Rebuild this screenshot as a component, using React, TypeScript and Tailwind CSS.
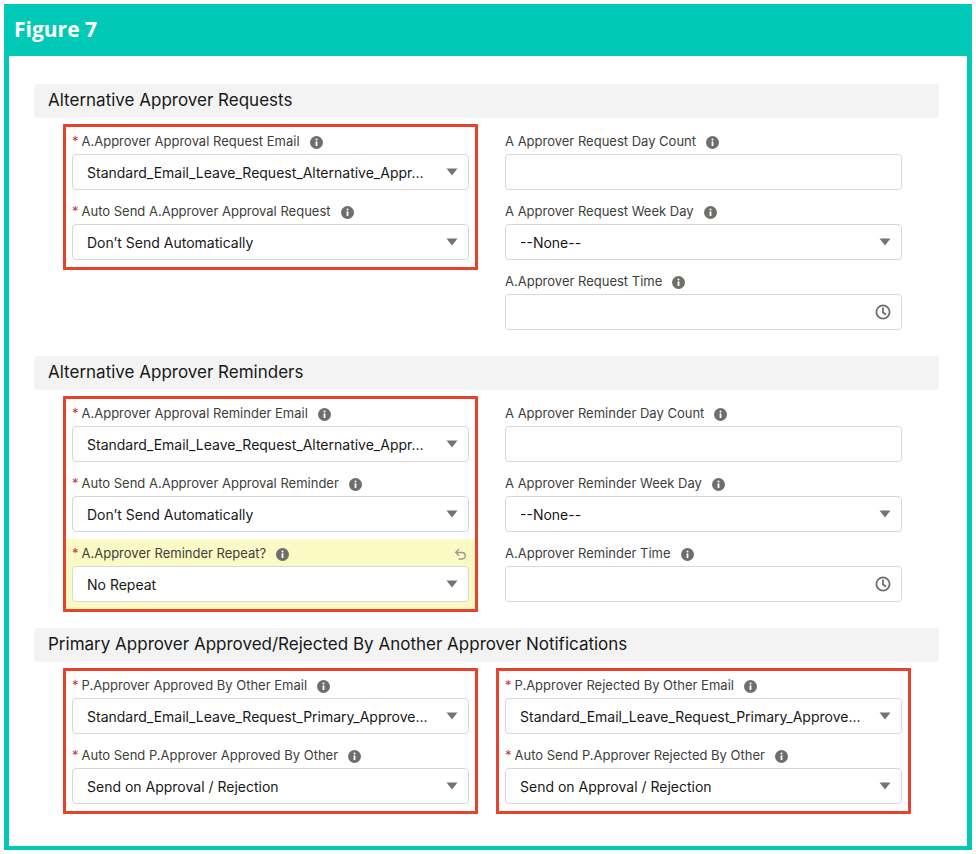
import React from "react";

const Info = () => (
  <svg width="13" height="13" viewBox="0 0 13 13" className="inline-block ml-[10px] shrink-0">
    <circle cx="6.5" cy="6.5" r="6.5" fill="#706e6b" />
    <circle cx="6.5" cy="3.6" r="1" fill="#fff" />
    <rect x="5.6" y="5.3" width="1.8" height="4.6" rx="0.4" fill="#fff" />
  </svg>
);

const Caret = () => (
  <svg width="12" height="8" viewBox="0 0 12 8" className="shrink-0">
    <path d="M0.5 0.5 H11.5 L6 7.5 Z" fill="#747474" />
  </svg>
);

const Clock = () => (
  <svg width="16" height="16" viewBox="0 0 16 16" className="shrink-0">
    <circle cx="8" cy="8" r="6.6" fill="none" stroke="#706e6b" strokeWidth="1.8" />
    <path d="M8 4.2 V8.3 L10.4 10.3" fill="none" stroke="#706e6b" strokeWidth="1.8" strokeLinecap="round" />
  </svg>
);

const Undo = () => (
  <svg width="14" height="14" viewBox="0 0 14 14" className="shrink-0">
    <path d="M3 5.5 H9 A3.2 3.2 0 0 1 9 12 H6" fill="none" stroke="#9a9a9a" strokeWidth="1.4" strokeLinecap="round" />
    <path d="M5.5 2.8 L2.8 5.5 L5.5 8.2" fill="none" stroke="#9a9a9a" strokeWidth="1.4" strokeLinecap="round" strokeLinejoin="round" />
  </svg>
);

type F = { label: string; req?: boolean; value?: string; kind: "select" | "text" | "time"; yellow?: boolean };

const Field = ({ f }: { f: F }) => (
  <div className={`px-[6px] pt-[3px] pb-[7px] ${f.yellow ? "bg-[#fbfac5]" : ""}`}>
    <div className="h-[24px] flex items-center text-[13px] text-[#3e3e3c]">
      {f.req && <span className="text-[#c23934] mr-[3px]">*</span>}
      <span>{f.label}</span>
      <Info />
      {f.yellow && (
        <span className="ml-auto mr-[2px]">
          <Undo />
        </span>
      )}
    </div>
    <div className="h-[36px] bg-white border border-[#d8d8d8] rounded-[4px] flex items-center pl-[14px] pr-[10px] gap-3">
      <span className="flex-1 whitespace-nowrap overflow-hidden text-[14px] text-[#181818]">{f.value ?? ""}</span>
      {f.kind === "select" && <Caret />}
      {f.kind === "time" && <Clock />}
    </div>
  </div>
);

const Col = ({ fields, red }: { fields: F[]; red?: boolean }) => (
  <div className={`w-[415px] border-[3px] self-start ${red ? "border-[#e8412c]" : "border-transparent"}`}>
    {fields.map((f, i) => (
      <Field key={i} f={f} />
    ))}
  </div>
);

const Section = ({ title, left, right, leftRed, rightRed, mb }: { title: string; left: F[]; right: F[]; leftRed?: boolean; rightRed?: boolean; mb: string }) => (
  <div className={mb}>
    <div className="h-[34px] bg-[#f3f3f3] rounded-[4px] flex items-center pl-[14px] text-[17px] text-[#181818]">{title}</div>
    <div className="flex gap-[18px] pl-[29px] mt-[6px]">
      <Col fields={left} red={leftRed} />
      <Col fields={right} red={rightRed} />
    </div>
  </div>
);

export default function App() {
  return (
    <div className="w-[976px] h-[854px] bg-white p-[4px]" style={{ fontFamily: 'Inter, "Liberation Sans", Arial, sans-serif' }}>
      <div className="w-[968px] h-[846px] bg-[#00c9b7] px-[5px] pb-[4px] flex flex-col">
        <div className="h-[52px] flex items-center pl-[5px] text-white text-[21px] font-bold" style={{ fontFamily: '"Open Sans", sans-serif' }}>
          Figure 7
        </div>
        <div className="flex-1 bg-white pt-[28px] pl-[25px] pr-[28px]">
          <Section
            title="Alternative Approver Requests"
            leftRed
            mb="mb-[16px]"
            left={[
              { label: "A.Approver Approval Request Email", req: true, value: "Standard_Email_Leave_Request_Alternative_Appr...", kind: "select" },
              { label: "Auto Send A.Approver Approval Request", req: true, value: "Don’t Send Automatically", kind: "select" },
            ]}
            right={[
              { label: "A Approver Request Day Count", kind: "text" },
              { label: "A Approver Request Week Day", value: "--None--", kind: "select" },
              { label: "A.Approver Request Time", kind: "time" },
            ]}
          />
          <Section
            title="Alternative Approver Reminders"
            leftRed
            mb="mb-[16px]"
            left={[
              { label: "A.Approver Approval Reminder Email", req: true, value: "Standard_Email_Leave_Request_Alternative_Appr...", kind: "select" },
              { label: "Auto Send A.Approver Approval Reminder", req: true, value: "Don’t Send Automatically", kind: "select" },
              { label: "A.Approver Reminder Repeat?", req: true, value: "No Repeat", kind: "select", yellow: true },
            ]}
            right={[
              { label: "A Approver Reminder Day Count", kind: "text" },
              { label: "A Approver Reminder Week Day", value: "--None--", kind: "select" },
              { label: "A.Approver Reminder Time", kind: "time" },
            ]}
          />
          <Section
            title="Primary Approver Approved/Rejected By Another Approver Notifications"
            leftRed
            rightRed
            mb=""
            left={[
              { label: "P.Approver Approved By Other Email", req: true, value: "Standard_Email_Leave_Request_Primary_Approve...", kind: "select" },
              { label: "Auto Send P.Approver Approved By Other", req: true, value: "Send on Approval / Rejection", kind: "select" },
            ]}
            right={[
              { label: "P.Approver Rejected By Other Email", req: true, value: "Standard_Email_Leave_Request_Primary_Approve...", kind: "select" },
              { label: "Auto Send P.Approver Rejected By Other", req: true, value: "Send on Approval / Rejection", kind: "select" },
            ]}
          />
        </div>
      </div>
    </div>
  );
}
